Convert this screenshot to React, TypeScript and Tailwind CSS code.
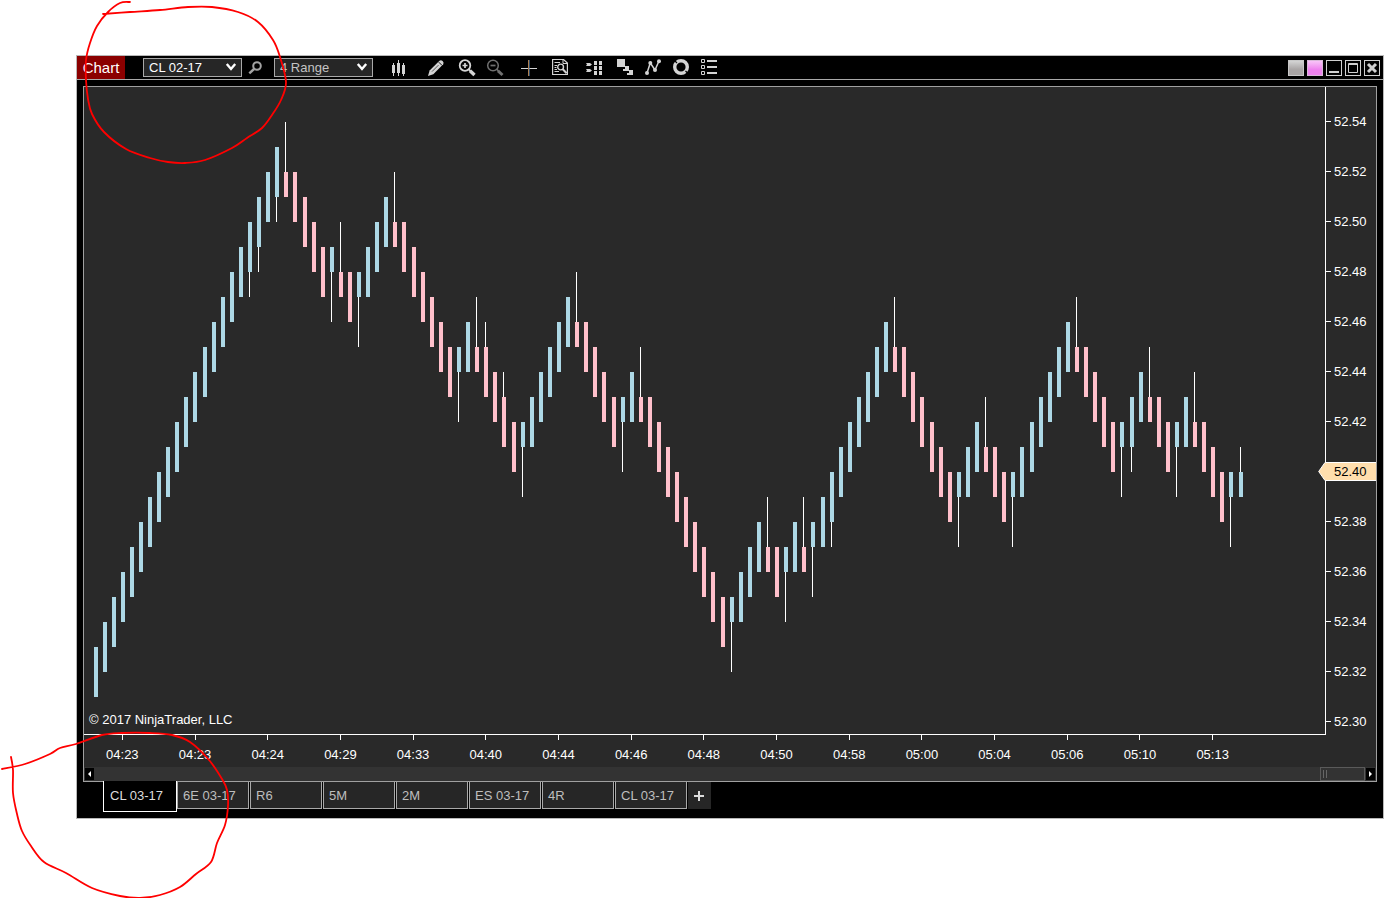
import React from 'react';
import { clsx } from 'clsx';

// [open, close, wick end], counted in ticks of 0.01 above 52.30
type Bar = [number, number, number?];
type Point = [number, number];

const run = (open: number, close: number, count: number): Bar[] => {
  const step = close > open ? 1 : -1;
  return Array.from({ length: count }, (_, i): Bar => [open + i * step, close + i * step]);
};

const BARS: Bar[] = [
  ...run(1, 3, 17),
  [18, 20, 17], [19, 21, 18], [20, 22], [21, 23, 20],
  [22, 21, 24], ...run(22, 20, 4),
  [18, 19, 16], [18, 17, 20], [18, 16], [17, 18, 15],
  ...run(17, 19, 3),
  [20, 19, 22], ...run(20, 18, 6),
  [14, 15, 12], [14, 16], [15, 14, 17], [15, 13, 16], [14, 12], [13, 11, 14], [12, 10],
  [11, 12, 9], ...run(11, 13, 5),
  [16, 15, 18], ...run(16, 14, 4),
  [12, 13, 10], [12, 14],
  [13, 12, 15], ...run(13, 11, 9),
  [4, 5, 2], ...run(4, 6, 3),
  [7, 6, 9], [7, 5], [6, 7, 4], [6, 8], [7, 6, 9], [7, 8, 5], [7, 9], [8, 10, 7],
  ...run(9, 11, 6),
  [15, 14, 17], ...run(15, 13, 6),
  [9, 10, 7], [9, 11], [10, 12],
  [11, 10, 13], [11, 9], [10, 8],
  [9, 10, 7], ...run(9, 11, 6),
  [15, 14, 17], ...run(15, 13, 4),
  [11, 12, 9], [11, 13, 10], [12, 14],
  [13, 12, 15], [13, 11], [12, 10],
  [11, 12, 9], [11, 13],
  [12, 11, 14], ...run(12, 10, 3),
  [9, 10, 7], [9, 10, 11],
];

const PRICES = ['52.54', '52.52', '52.50', '52.48', '52.46', '52.44', '52.42', '52.40', '52.38', '52.36', '52.34', '52.32', '52.30'];
const TIMES = ['04:23', '04:23', '04:24', '04:29', '04:33', '04:40', '04:44', '04:46', '04:48', '04:50', '04:58', '05:00', '05:04', '05:06', '05:10', '05:13'];
const TABS = ['CL 03-17', '6E 03-17', 'R6', '5M', '2M', 'ES 03-17', '4R', 'CL 03-17'];

const BAR_STEP = 9.0878;
const tickY = (tick: number) => 635 - tick * 25;

function Candles() {
  return (
    <svg viewBox="0 0 1241 647" className="block w-full" shapeRendering="crispEdges" role="img" aria-label="CL 02-17 range bars">
      {BARS.map(([open, close, wick], i) => {
        const x = 10 + Math.floor(i * BAR_STEP);
        const high = Math.max(open, close);
        const low = Math.min(open, close);
        const top = Math.max(high, wick ?? high);
        const bottom = Math.min(low, wick ?? low);
        return (
          <g key={i}>
            {wick !== undefined && (
              <rect x={x + 1} y={tickY(top)} width={1} height={(top - bottom) * 25} fill="#fff" />
            )}
            <rect x={x} y={tickY(high)} width={4} height={(high - low) * 25} fill={close > open ? '#add8e6' : '#ffc0cb'} />
          </g>
        );
      })}
    </svg>
  );
}

interface ToolProps {
  label: string;
  className?: string;
  children: React.ReactNode;
}

function Tool({ label, className, children }: ToolProps) {
  return (
    <button type="button" aria-label={label} className={clsx('flex h-6 w-7 shrink-0 items-center justify-center text-[#d4d4d4]', className)}>
      <svg width="18" height="18" viewBox="0 0 18 18" fill="none" stroke="currentColor">
        {children}
      </svg>
    </button>
  );
}

function Picker({ label, value, dim }: { label: string; value: string; dim?: boolean }) {
  return (
    <div className="relative">
      <select
        aria-label={label}
        defaultValue={value}
        className={clsx(
          'block h-[19px] w-[99px] appearance-none border border-[#a9a9a9] bg-[#262626] pt-px pl-[5px] text-[13px] leading-4',
          dim ? 'text-[#c4c4c4]' : 'text-white',
        )}
      >
        <option>{value}</option>
      </select>
      <svg width="12" height="8" viewBox="0 0 12 8" className="pointer-events-none absolute top-[5px] right-[5px]" fill="none" stroke="#fff" strokeWidth="2.4">
        <path d="M1.8 1 L6 6 L10.2 1" />
      </svg>
    </div>
  );
}

function Toolbar() {
  return (
    <div className="flex items-center">
      <Tool label="Chart style">
        <g fill="currentColor" stroke="none" shapeRendering="crispEdges">
          <rect x="3" y="6" width="3" height="8" />
          <rect x="4" y="4" width="1" height="13" />
          <rect x="8" y="4" width="3" height="10" />
          <rect x="9" y="1" width="1" height="16" />
          <rect x="13" y="6" width="3" height="9" />
          <rect x="14" y="4" width="1" height="13" />
        </g>
      </Tool>
      <Tool label="Drawing tools" className="ml-2.5">
        <path d="M1 17 L2.6 11.6 L12.5 1.7 Q14 .6 15.6 2 Q17.3 3.8 16.2 5.3 L6.3 15.2 Z" fill="currentColor" stroke="none" />
        <path d="M5 12.6 L11.5 6.1" stroke="#555" />
        <path d="M11.8 3.2 L14.8 6.2" stroke="#111" />
      </Tool>
      <Tool label="Zoom in" className="ml-[3px]">
        <circle cx="7" cy="6.5" r="5.3" strokeWidth="1.8" />
        <path d="M7 4 V9 M4.5 6.5 H9.5" strokeWidth="1.7" />
        <path d="M10.8 10.3 L12.6 12.1" strokeWidth="1.8" />
        <path d="M12 11.8 L16.5 16" strokeWidth="3.4" />
      </Tool>
      <Tool label="Zoom out">
        <g stroke="#707070">
          <circle cx="7" cy="6.5" r="5.3" strokeWidth="1.5" />
          <path d="M4.5 6.5 H9.5" strokeWidth="1.7" />
          <path d="M10.8 10.3 L12.6 12.1" strokeWidth="1.6" />
          <path d="M12 11.8 L16.5 16" strokeWidth="3" />
        </g>
      </Tool>
      <Tool label="Crosshair" className="ml-1.5">
        <path d="M1 9.5 H17" />
        <path d="M8.5 1 V17" stroke="#b08050" />
        <path d="M9.5 1 V17" stroke="#4d7fb0" strokeOpacity=".6" />
      </Tool>
      <Tool label="Data box" className="ml-[3px]">
        <path d="M1.6 .5 H12.5 L16.4 4 V15.5 H1.6 Z" strokeWidth="1.2" />
        <path d="M12 1 V4.5 H16" />
        <path d="M3.5 3.5 H9 M3.5 6.5 H6 M3.5 8.5 H5.5 M3.5 10.5 H6 M3.5 12.5 H8" />
        <circle cx="9.6" cy="8" r="2.9" strokeWidth="1.4" />
        <path d="M11.6 10 L15.6 14.2" strokeWidth="2" />
      </Tool>
      <Tool label="Chart trader" className="ml-1.5">
        <g fill="currentColor" stroke="none">
          <rect x="9" y="2" width="3" height="4" />
          <rect x="14" y="2" width="3" height="4" />
          <rect x="9" y="7" width="3" height="4" />
          <rect x="14" y="7" width="3" height="4" />
          <rect x="9" y="12" width="3" height="4" />
          <rect x="14" y="12" width="3" height="4" />
          <path d="M1 4 H5 L7 5.5 L5 7 H1 L2 5.5 Z M1 10 H5 L7 11.5 L5 13 H1 L2 11.5 Z" />
        </g>
      </Tool>
      <Tool label="Data series" className="ml-[3px]">
        <g fill="currentColor" stroke="none" shapeRendering="crispEdges">
          <rect x="1" y="0" width="8" height="8" />
          <rect x="9" y="7" width="4" height="5" />
          <rect x="7" y="10" width="4" height="2" />
          <rect x="13" y="11" width="4" height="5" />
          <rect x="11" y="14" width="3" height="2" />
        </g>
      </Tool>
      <Tool label="Indicators">
        <path d="M3 14 L6.3 4 L11 11 L15 2" strokeWidth="1.5" />
        <g fill="currentColor" stroke="none">
          <circle cx="3" cy="14" r="2" />
          <circle cx="6.3" cy="4" r="2" />
          <circle cx="11" cy="11" r="2" />
          <circle cx="15" cy="2.3" r="2" />
        </g>
      </Tool>
      <Tool label="Strategies">
        <circle cx="9" cy="8" r="6.3" strokeWidth="3.4" />
        <path d="M2.5 1.5 L5 4 M13.5 12 L16 14.5" stroke="#000" strokeWidth="1.2" />
      </Tool>
      <Tool label="Properties">
        <path d="M1.5 .5 H4.5 V3.5 H1.5 Z M1.5 6.5 H4.5 V9.5 H1.5 Z M1.5 12.5 H4.5 V15.5 H1.5 Z" />
        <path d="M7 2 H17 M7 8 H17 M7 14 H17" strokeWidth="2" />
      </Tool>
    </div>
  );
}

function WindowButtons() {
  const box = 'flex size-4 items-center justify-center border border-[#d0d0d0]';
  return (
    <div className="ml-auto flex gap-[3px] pr-[3px]">
      <button type="button" aria-label="Instrument link" className="size-4 border border-[#c8c8c8] bg-linear-to-b from-[#d4d4d4] to-[#a9a5a5] to-60%" />
      <button type="button" aria-label="Interval link" className="size-4 border border-[#d8b8d8] bg-linear-to-b from-[#f8c4f8] to-[#ee82ee] to-60%" />
      <button type="button" aria-label="Minimize" className={box}>
        <svg width="14" height="14" viewBox="0 0 14 14"><path d="M2 11 H12" stroke="#d0d0d0" strokeWidth="2" /></svg>
      </button>
      <button type="button" aria-label="Maximize" className={box}>
        <svg width="14" height="14" viewBox="0 0 14 14" fill="none" stroke="#d0d0d0"><path d="M2.5 2.5 H11.5 V11.5 H2.5 Z M2 3.5 H12" /></svg>
      </button>
      <button type="button" aria-label="Close" className={box}>
        <svg width="14" height="14" viewBox="0 0 14 14"><path d="M3 3 L11 11 M11 3 L3 11" stroke="#d0d0d0" strokeWidth="3" /></svg>
      </button>
    </div>
  );
}

function TitleBar() {
  return (
    <header className="flex h-6 items-center border-b border-[#a9a9a9]">
      <h1 className="flex h-full w-12 items-center justify-center bg-[#8b0000] pt-0.5 text-[15px] text-white">Chart</h1>
      <div className="ml-[18px] flex items-center">
        <Picker label="Instrument" value="CL 02-17" />
        <button type="button" aria-label="Search instrument" className="flex w-8 justify-center pr-1.5">
          <svg width="14" height="14" viewBox="0 0 14 14" fill="none" stroke="#a3a3a3">
            <circle cx="9" cy="5" r="3.8" strokeWidth="2" />
            <path d="M6 8 L1.3 12.3" strokeWidth="2.4" />
          </svg>
        </button>
        <Picker label="Interval" value="4 Range" dim />
      </div>
      <div className="ml-[11px]">
        <Toolbar />
      </div>
      <WindowButtons />
    </header>
  );
}

function ScrollBar() {
  return (
    <div className="flex h-3.5 items-center bg-[#333] px-px">
      <button type="button" aria-label="Scroll left" className="flex h-3 w-[9px] items-center justify-center bg-black">
        <svg width="3" height="6" viewBox="0 0 3 6"><path d="M3 0 V6 L0 3 Z" fill="#fff" /></svg>
      </button>
      <div className="ml-auto flex h-3.5 w-[45px] items-center gap-0.5 border border-[#5a5a5a] pl-0.5">
        <span className="h-2 w-px bg-[#666]" />
        <span className="h-2 w-px bg-[#666]" />
      </div>
      <button type="button" aria-label="Scroll right" className="ml-px flex h-3 w-[9px] items-center justify-center bg-black">
        <svg width="3" height="6" viewBox="0 0 3 6"><path d="M0 0 V6 L3 3 Z" fill="#fff" /></svg>
      </button>
    </div>
  );
}

function ChartPanel() {
  return (
    <section className="mx-1.5 mt-1.5 border border-[#a0a0a0] bg-[#292929] text-[13px] text-white">
      <div className="relative flex">
        <div className="min-w-0 flex-1">
          <div className="relative border-r border-b border-white">
            <Candles />
            <p className="absolute bottom-[5px] left-[5px] leading-[18px]">© 2017 NinjaTrader, LLC</p>
          </div>
          <div className="grid h-8 grid-cols-16 pr-[77px] pl-0.5">
            {TIMES.map((time, i) => (
              <div key={i} className="flex flex-col items-center">
                <span className="h-[5px] w-px bg-white" />
                <span className="mt-1.5 leading-[18px]">{time}</span>
              </div>
            ))}
          </div>
        </div>
        <div className="w-[50px] pt-[9px]">
          {PRICES.map((price) => (
            <div key={price} className="flex h-[50px] items-center gap-[3px]">
              <span className="h-px w-[5px] bg-white" />
              <span className="pt-0.5 leading-5">{price}</span>
            </div>
          ))}
        </div>
        <div className="absolute top-[375px] right-0 h-[19px] w-[58px]">
          <svg width="58" height="19" viewBox="0 0 58 19" className="absolute inset-0">
            <path d="M58 .5 H7 L.7 9.5 L7 18.5 H58" fill="#ffdead" stroke="#fff" />
          </svg>
          <span className="relative block pl-4 leading-5 text-black">52.40</span>
        </div>
      </div>
      <ScrollBar />
    </section>
  );
}

function TabBar() {
  return (
    <nav aria-label="Chart tabs" className="flex items-start pl-[26px] text-[13px] text-[#bebebe]">
      {TABS.map((tab, i) =>
        i === 0 ? (
          <button key={i} type="button" aria-current="page" className="relative -mt-px h-[31px] w-[74px] border border-t-0 border-white bg-black pl-1.5 text-left text-[#dcdcdc]">
            {tab}
          </button>
        ) : (
          <button key={i} type="button" className={clsx('h-[27px] w-[72px] border border-t-0 border-[#a9a9a9] bg-[#262626] pt-0.5 pl-[5px] text-left', i > 1 && 'ml-px')}>
            {tab}
          </button>
        ),
      )}
      <button type="button" aria-label="Add tab" className="ml-px flex h-[27px] w-[23px] items-center justify-center bg-[#262626] pr-px">
        <svg width="10" height="10" viewBox="0 0 10 10"><path d="M5 0 V10 M0 5 H10" stroke="#dcdcdc" strokeWidth="2" /></svg>
      </button>
    </nav>
  );
}

const PICKER_RING: Point[] = [
  [130, 2], [120, 3], [108, 12], [97, 26], [90, 43], [86, 60], [86, 80], [88, 99], [92, 114], [104, 132], [126, 149],
  [150, 158], [168, 162], [185, 163], [205, 160], [232, 148], [247, 138], [262, 128], [272, 115], [281, 100], [286, 82],
  [280, 57], [273, 40], [258, 22], [238, 12], [212, 7], [188, 7], [160, 10], [130, 12], [103, 14],
];

const TAB_RING: Point[] = [
  [11, 757], [13, 770], [13, 793], [17, 814], [22, 831], [31, 846], [44, 862], [66, 873], [92, 888], [120, 896],
  [140, 898], [160, 895], [180, 887], [196, 874], [211, 862], [217, 843], [225, 825], [228, 806], [227, 790], [222, 779],
  [209, 760], [190, 742], [172, 735], [150, 733], [122, 733], [102, 735], [76, 744], [60, 748], [50, 754], [25, 764], [2, 769],
];

// Catmull-Rom spline through the points, as cubic beziers
const smooth = (points: Point[]) =>
  points.slice(1).reduce((path, [x, y], i) => {
    const [x0, y0] = points[Math.max(i - 1, 0)];
    const [x1, y1] = points[i];
    const [x3, y3] = points[Math.min(i + 2, points.length - 1)];
    return `${path} C${x1 + (x - x0) / 6} ${y1 + (y - y0) / 6} ${x - (x3 - x1) / 6} ${y - (y3 - y1) / 6} ${x} ${y}`;
  }, `M${points[0][0]} ${points[0][1]}`);

// hand-drawn rings around the instrument picker and the active tab
function Markup() {
  return (
    <svg width="300" height="898" viewBox="0 0 300 898" className="pointer-events-none absolute top-0 left-0" fill="none" stroke="#f00" strokeWidth="1.8" strokeLinejoin="round" strokeLinecap="round">
      <path d={smooth(PICKER_RING)} />
      <path d={smooth(TAB_RING)} />
    </svg>
  );
}

export default function App() {
  return (
    <main className="relative min-h-screen bg-white pt-[55px] pl-[76px] font-['Liberation_Sans',Arial,sans-serif]">
      <div className="border border-[#b8b8b8] bg-black pb-1.5">
        <TitleBar />
        <ChartPanel />
        <TabBar />
      </div>
      <Markup />
    </main>
  );
}
